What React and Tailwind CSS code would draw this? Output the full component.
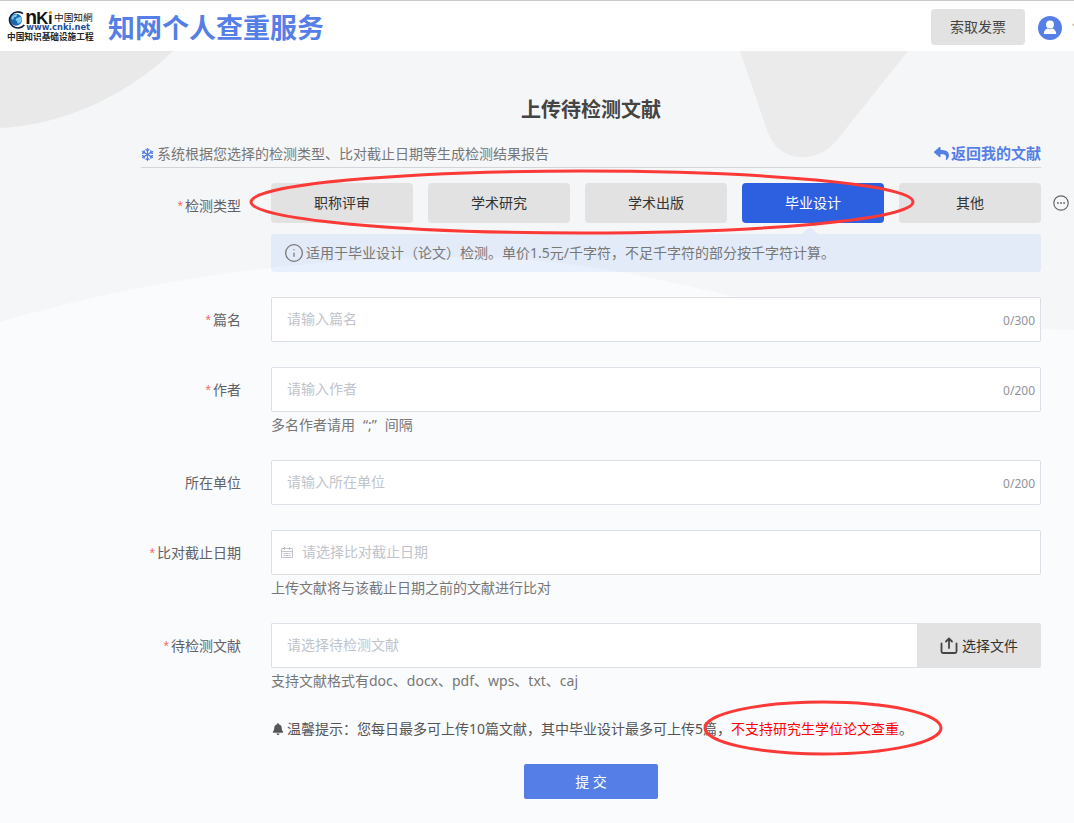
import { useState } from 'react'
import { Info } from 'lucide-react'
import { FaBell, FaRegSnowflake, FaReply } from 'react-icons/fa'

const TYPES = ['职称评审', '学术研究', '学术出版', '毕业设计', '其他']

const inputClass = 'block h-[45px] w-full rounded-xs border border-[#dcdfe6] bg-white pb-0.5 text-[#606266] placeholder-[#c0c4cc] outline-none focus:border-[#557fe6]'

function CnkiLogo() {
  return (
    <svg width="88" height="32" viewBox="0 0 264 96" className="mb-1 shrink-0" role="img" aria-label="中国知网">
      <circle cx="27" cy="29" r="18" fill="#1767b3" />
      <path d="M13 22c6-8 12-10 18-9l-3 7-7 2-2 7-5-1zM29 24l11-4 5 8-5 10-8 3-2-7-5-4z" fill="#7cc8ea" />
      <path d="M48 11A25 24 0 1 0 52 45" fill="none" stroke="#111d38" strokeWidth="5" />
      <g fontFamily="Liberation Sans, sans-serif" fontWeight="700" fill="#141414">
        <text x="55" y="42" fontSize="58">n</text>
        <text x="88" y="42" fontSize="50">K</text>
        <text x="123" y="42" fontSize="50">ı</text>
      </g>
      <circle cx="130" cy="8" r="5" fill="#f39a1f" />
      <text x="141" y="33" fontSize="29" fontFamily="Noto Sans CJK SC, sans-serif" fill="#141414">中国知網</text>
      <text x="58" y="61" fontSize="25" fontFamily="DejaVu Sans, sans-serif" fontWeight="700" fill="#1d4f9c">www.cnki.net</text>
      <text x="0" y="91" fontSize="26" fontFamily="Noto Sans CJK SC, sans-serif" fontWeight="700" fill="#222">中国知识基础设施工程</text>
    </svg>
  )
}

function Header() {
  return (
    <header className="flex h-[51px] items-center overflow-hidden border-t border-[#c9c9c9] bg-white pt-1 pl-[7px]">
      <CnkiLogo />
      <span className="ml-[13px] text-[27px] leading-9 font-bold whitespace-nowrap text-[#557fe6]">知网个人查重服务</span>
      <button type="button" className="mb-0.5 ml-auto h-9 w-[94px] shrink-0 rounded-sm bg-[#e2e2e2] text-[#444]">索取发票</button>
      <svg width="24" height="24" viewBox="0 0 24 24" className="ml-[13px] shrink-0" aria-hidden="true">
        <circle cx="12" cy="12" r="12" fill="#557fe6" />
        <circle cx="12" cy="8.6" r="4" fill="#fff" />
        <path d="M5.800 18c0-3.200 1.900-5 4-5.400q2.200 1.200 4.400 0c2.100.4 4 2.200 4 5.400z" fill="#fff" />
      </svg>
      <span className="ml-[9px] w-[3px] shrink-0 text-[#999]">1</span>
    </header>
  )
}

function Backdrop() {
  return (
    <svg className="absolute inset-0 -z-10 h-full w-full" viewBox="0 0 1074 772" preserveAspectRatio="xMinYMin slice" aria-hidden="true">
      <rect width="1074" height="772" fill="#f5f6f8" />
      <path d="M0 0H173C125 46 62 74 0 77z" fill="#e9e9e9" />
      <path d="M740 0H908L837 89C818 113 780 113 768 82z" fill="#ebebeb" />
      <path d="M0 271C150 226 320 206 450 206C570 206 640 224 736 246C840 270 950 277 1074 279V772H0z" fill="#fafbfd" />
    </svg>
  )
}

function RequiredMark() {
  return <span className="mr-0.5 font-['Liberation_Sans',sans-serif] leading-none text-[#f56c6c]">*</span>
}

function Field({ id, label, required, help, children }) {
  return (
    <div className={`flex gap-[30px] ${help ? 'mb-6' : 'mb-[25px]'}`}>
      <label htmlFor={id} className="w-[100px] shrink-0 text-right leading-[45px] text-[#606266]">
        {required && <RequiredMark />}
        {label}
      </label>
      <div className="min-w-0 flex-1">
        {children}
        {help && <p className="pt-px leading-[23px] text-[#777]">{help}</p>}
      </div>
    </div>
  )
}

function CountedInput({ id, placeholder, max }) {
  const [value, setValue] = useState('')

  return (
    <div className="relative">
      <input
        id={id}
        type="text"
        value={value}
        maxLength={max}
        onChange={e => setValue(e.target.value)}
        placeholder={placeholder}
        className={`${inputClass} pr-14 pl-[15px]`}
      />
      <span className="absolute inset-y-0 right-1.5 flex items-center pt-0.5 text-xs text-[#909399]">
        {value.length}/{max}
      </span>
    </div>
  )
}

export default function App() {
  const [type, setType] = useState('毕业设计')

  return (
    <div className="min-h-screen bg-[#fafbfd] font-['Noto_Sans','Noto_Sans_CJK_SC',sans-serif] text-sm" lang="zh-CN">
      <Header />
      <main className="relative isolate min-h-[calc(100vh-51px)] overflow-hidden pt-11 pr-[33px] pb-6 pl-[141px]">
        <Backdrop />
        <h1 className="text-center text-xl leading-[30px] font-bold text-[#444]">上传待检测文献</h1>

        <div className="mt-4 mb-[15px] flex h-[27px] items-center justify-between border-b border-[#d3d5d8]">
          <p className="flex items-center gap-[3px] text-[#777]">
            <FaRegSnowflake size={13} className="text-[#557fe6]" />
            系统根据您选择的检测类型、比对截止日期等生成检测结果报告
          </p>
          <a href="#" className="flex items-center gap-0.5 text-[15px] font-bold text-[#557fe6]">
            <FaReply size={15} />
            返回我的文献
          </a>
        </div>

        <form onSubmit={e => e.preventDefault()}>
          <div className="relative mb-[25px] flex gap-[30px]">
            <span id="type-label" className="w-[100px] shrink-0 text-right leading-[45px] text-[#606266]">
              <RequiredMark />检测类型
            </span>
            <div className="min-w-0 flex-1">
              <div className="-mr-7 flex items-center gap-3">
                <div role="group" aria-labelledby="type-label" className="grid flex-1 grid-cols-5 gap-[15px]">
                  {TYPES.map(t => (
                    <button
                      key={t}
                      type="button"
                      aria-pressed={t === type}
                      onClick={() => setType(t)}
                      className={`h-10 rounded-sm ${t === type ? 'bg-[#2d60e0] text-white' : 'bg-[#e2e2e2] text-[#333]'}`}
                    >
                      {t}
                    </button>
                  ))}
                </div>
                <button type="button" aria-label="更多" className="size-4 shrink-0 text-[#666]">
                  <svg viewBox="0 0 16 16" className="size-4">
                    <circle cx="8" cy="8" r="7.200" fill="none" stroke="currentColor" strokeWidth="1.200" />
                    <path d="M4 7.200h1.800v1.600H4zM7.100 7.200h1.800v1.600H7.100zM10.200 7.200H12v1.600h-1.800z" fill="currentColor" />
                  </svg>
                </button>
              </div>
              <div className="relative mt-[11px] flex h-[38px] items-center gap-0.5 rounded-sm bg-[#4d8aff]/10 pl-[13px] text-[#777]">
                <svg viewBox="0 0 16 7" className="absolute bottom-full left-[69%] h-[7px] w-4" aria-hidden="true">
                  <path d="M0 7L8 0l8 7z" fill="#4d8aff" fillOpacity=".1" />
                </svg>
                <Info size={20} strokeWidth={1.5} />
                适用于毕业设计（论文）检测。单价1.5元/千字符，不足千字符的部分按千字符计算。
              </div>
            </div>
            {/* red marker ring over the type buttons */}
            <svg viewBox="0 0 666 66" preserveAspectRatio="none" className="pointer-events-none absolute -top-3.5 right-[126px] left-[108px] h-[66px] w-[calc(100%-234px)]" aria-hidden="true">
              <ellipse cx="333" cy="33" rx="331" ry="31" fill="none" stroke="#fb3a38" strokeWidth="3" />
            </svg>
          </div>

          <Field id="title" label="篇名" required>
            <CountedInput id="title" placeholder="请输入篇名" max={300} />
          </Field>
          <Field
            id="author"
            label="作者"
            required
            help={<>多名作者请用<span className="mx-2">“;”</span>间隔</>}
          >
            <CountedInput id="author" placeholder="请输入作者" max={200} />
          </Field>
          <Field id="unit" label="所在单位">
            <CountedInput id="unit" placeholder="请输入所在单位" max={200} />
          </Field>
          <Field id="deadline" label="比对截止日期" required help="上传文献将与该截止日期之前的文献进行比对">
            <div className="relative">
              <svg viewBox="0 0 12 12" className="absolute inset-y-0 left-2.5 my-auto size-3 text-[#c0c4cc]" fill="none" stroke="currentColor" aria-hidden="true">
                <path d="M.5 1.500h11v9H.5zM.5 4.500h11M3.500 0v3M8.500 0v3" />
                <path d="M2.500 6.500h7M2.500 8.500h7" strokeDasharray="2 .5" />
              </svg>
              <input id="deadline" type="text" placeholder="请选择比对截止日期" className={`${inputClass} pr-4 pl-[30px]`} />
            </div>
          </Field>
          <Field id="document" label="待检测文献" required help="支持文献格式有doc、docx、pdf、wps、txt、caj">
            <div className="flex">
              <input id="document" type="text" readOnly placeholder="请选择待检测文献" className={`${inputClass} min-w-0 flex-1 rounded-r-none border-r-0 px-[15px]`} />
              <button type="button" className="flex h-[45px] w-[124px] shrink-0 items-center justify-center gap-1 rounded-r-xs bg-[#e2e2e2] text-[#333]">
                <svg width="18" height="18" viewBox="0 0 18 18" fill="none" stroke="#444" strokeWidth="1.800" strokeLinecap="round" strokeLinejoin="round" aria-hidden="true">
                  <path d="M1.500 6.500v8q0 1.500 1.500 1.500h12q1.500 0 1.500-1.500v-8M9 11V2M6 4.500l3-3 3 3" />
                </svg>
                选择文件
              </button>
            </div>
          </Field>

          <p className="flex items-center pl-[131px] leading-[26px] text-[#555]">
            <FaBell size={12} className="mr-[3px] shrink-0" />
            温馨提示：您每日最多可上传10篇文献，其中毕业设计最多可上传5篇，
            <span className="relative text-[#f00]">
              不支持研究生学位论文查重
              {/* red marker ring over the warning */}
              <svg viewBox="0 0 240 56" className="pointer-events-none absolute -top-4 -left-7 h-14 w-60 max-w-none" aria-hidden="true">
                <ellipse cx="120" cy="28" rx="118" ry="26" fill="none" stroke="#fb3a38" strokeWidth="3" />
              </svg>
            </span>
            。
          </p>
          <button type="submit" className="mx-auto mt-[22px] block h-[35px] w-[134px] rounded-xs bg-[#557fe6] text-white">提 交</button>
        </form>
      </main>
    </div>
  )
}
